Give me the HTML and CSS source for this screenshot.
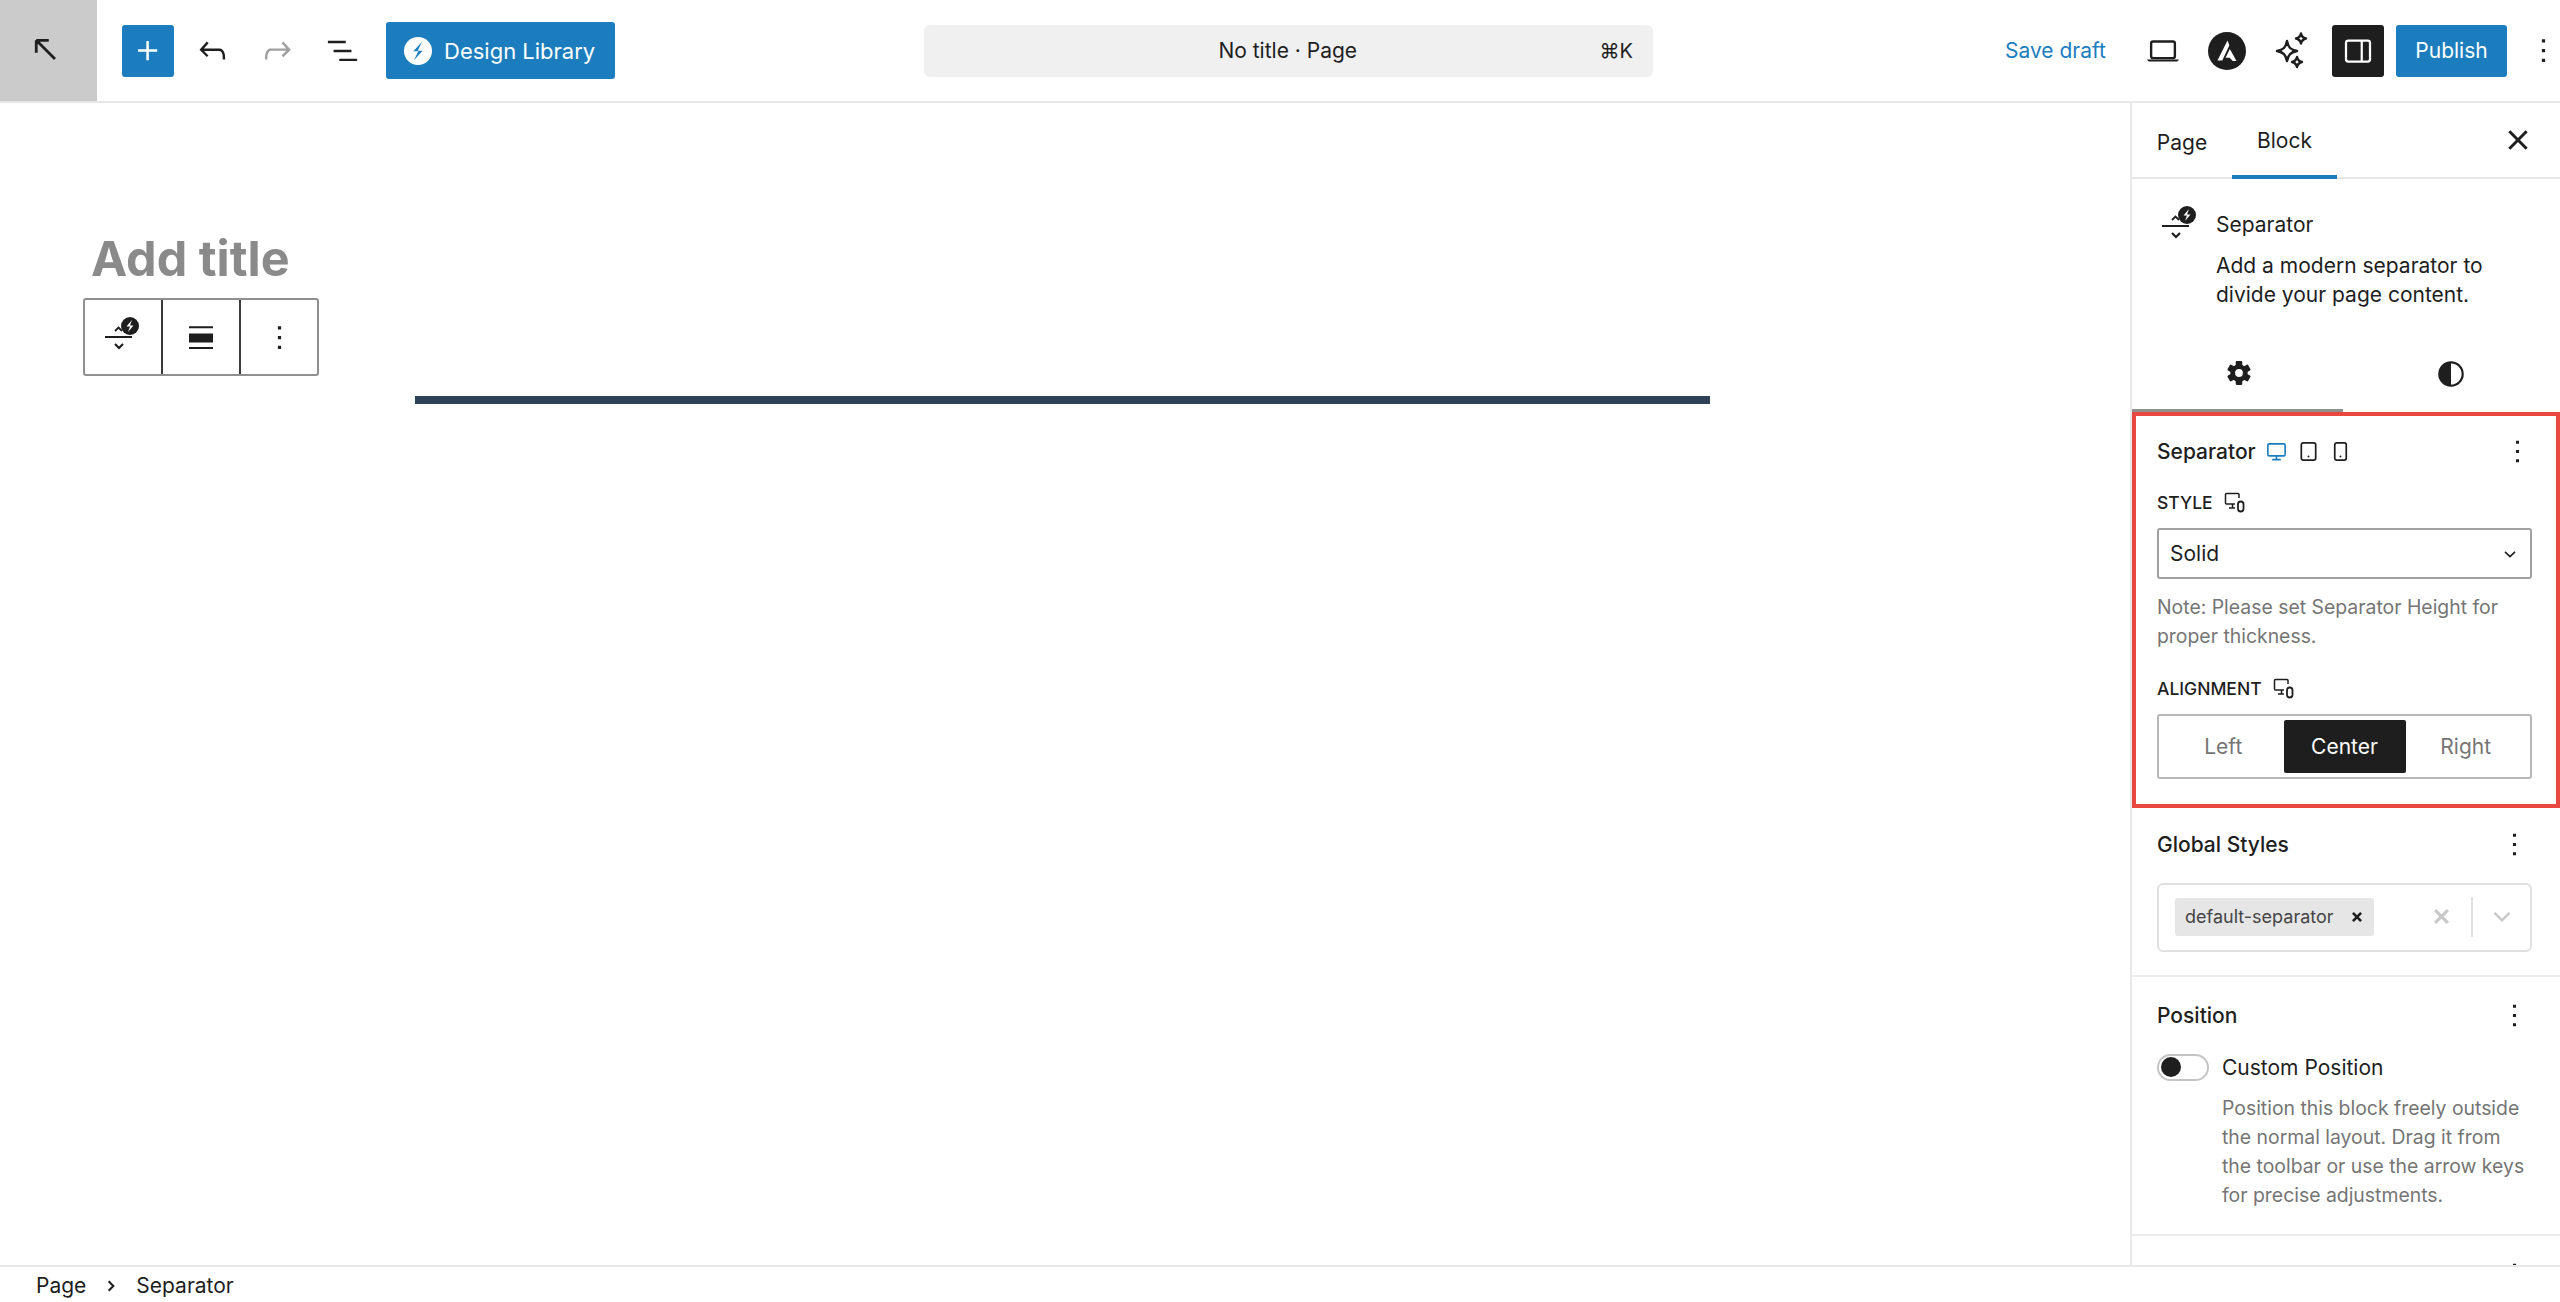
FILE: index.html
```html
<!DOCTYPE html>
<html lang="en">
<head>
  <meta charset="UTF-8" />
  <meta name="viewport" content="width=device-width, initial-scale=1.0" />
  <title>Edit Page</title>
  <link rel="stylesheet" href="styles.css">
</head>
<body>
  <svg class="defs" width="0" height="0">
    <symbol id="i-more" viewBox="0 0 24 24"><path d="M13 19h-2v-2h2v2zm0-6h-2v-2h2v2zm0-6h-2V5h2v2z"/></symbol>
    <symbol id="i-link" viewBox="0 0 24 24"><path d="M3.500 13V4.500a1 1 0 0 1 1-1H16a1 1 0 0 1 1 1V8M3.500 13a1 1 0 0 0 1 1H13M7 18h6M10.500 14v4" fill="none" stroke="currentColor" stroke-width="1.500"/><rect x="16" y="11.500" width="5.500" height="10" rx="2.700" fill="none" stroke="currentColor" stroke-width="1.800"/></symbol>
    <symbol id="i-sep" viewBox="0 0 40 40"><path d="M3 20h27" fill="none" stroke="currentColor" stroke-width="2"/><path d="M13 14l3.500-3.500 3.500 3.500" fill="none" stroke="currentColor" stroke-width="1.800"/><path d="M13 27l4 4 4-4" fill="none" stroke="currentColor" stroke-width="2.200"/><circle cx="28" cy="9" r="9"/><path d="M30 3l-5.500 6.500H28l-2 5.500 5.500-6.500H28z" fill="#fff"/></symbol>
  </svg>

  <header class="topbar">
    <div class="back">
      <svg class="icon-back" viewBox="0 0 24 24"><path d="M5 5h10M5 5v10M5 5l15 15" fill="none" stroke="currentColor" stroke-width="2.200"/></svg>
    </div>
    <div class="tools">
      <button class="btn-add"><svg viewBox="0 0 24 24"><path d="M11 12.500V17.500H12.500V12.500H17.500V11H12.500V6H11V11H6V12.500H11Z"/></svg></button>
      <svg class="tool" viewBox="0 0 24 24"><path d="M18.300 11.700c-.6-.6-1.400-.9-2.300-.9H6.700l2.900-3.300-1.100-1-4.500 5L8.500 16l1-1-2.700-2.700H16c.5 0 .9.2 1.300.5 1 1 1 3.400 1 4.500v.3h1.500v-.2c0-1.500 0-4.300-1.500-5.700z"/></svg>
      <svg class="tool off" viewBox="0 0 24 24"><path d="M15.600 6.500l-1.100 1 2.900 3.300H8c-.9 0-1.700.3-2.300.9-1.400 1.500-1.400 4.200-1.400 5.600v.2h1.500v-.3c0-1.100 0-3.500 1-4.500.3-.3.7-.5 1.300-.5h9.200L14.500 15l1.100 1.100 4.600-4.600-4.600-5z"/></svg>
      <svg class="tool" viewBox="0 0 24 24"><path d="M3 6h11v1.500H3V6zm3.500 5.500h11V13h-11v-1.500zM21 17H10v1.500h11V17z"/></svg>
      <button class="btn-library">
        <svg viewBox="0 0 24 24"><circle cx="12" cy="12" r="12" fill="#fff"/><path d="M15.500 4L8 12.200h4.300L8.500 20l7.500-8.200h-4.300z" fill="#1b7dbd"/></svg>
        Design Library
      </button>
    </div>
    <div class="command">
      <span class="command-title">No title · Page</span>
      <span class="command-key">⌘K</span>
    </div>
    <div class="actions">
      <span class="save">Save draft</span>
      <svg class="tool laptop" viewBox="0 0 24 24"><rect x="4.500" y="6" width="15" height="10.500" rx="1.200" fill="none" stroke="currentColor" stroke-width="1.500"/><path d="M2 17.300h20v.4l-1 1H3l-1-1z"/></svg>
      <svg class="astra" viewBox="0 0 40 40"><circle cx="20" cy="20" r="20" fill="#1e1e1e"/><path d="M20.500 9L10 30h5l7.500-16zM23 18l-4.500 9h4.300l3.200 3.500H30z" fill="#fff"/></svg>
      <svg class="sparkle" viewBox="0 0 40 40"><g fill="none" stroke="#1e1e1e" stroke-width="2.400" stroke-linejoin="round"><path d="M15 10c1.300 6.500 3.500 8.800 10 10-6.500 1.300-8.700 3.500-10 10-1.300-6.500-3.500-8.700-10-10 6.500-1.200 8.700-3.500 10-10z"/><path d="M29 2.500c.7 3.300 1.700 4.300 5 5-3.300.7-4.300 1.700-5 5-.7-3.300-1.700-4.300-5-5 3.300-.7 4.300-1.700 5-5z"/><path d="M25 26c.7 3.300 1.700 4.300 5 5-3.300.7-4.300 1.700-5 5-.7-3.300-1.700-4.300-5-5 3.300-.7 4.300-1.700 5-5z"/></g></svg>
      <button class="btn-sidebar"><svg viewBox="0 0 24 24"><rect x="4" y="5" width="16" height="14" rx="1.500" fill="none" stroke="#fff" stroke-width="1.500"/><path d="M14.500 5v14" stroke="#fff" stroke-width="1.500"/></svg></button>
      <button class="btn-publish">Publish</button>
      <svg class="more-top"><use href="#i-more"/></svg>
    </div>
  </header>

  <div class="main">
    <section class="canvas">
      <h1 class="post-title">Add title</h1>
      <div class="block-toolbar">
        <div class="tb-cell"><svg class="tb-sep"><use href="#i-sep"/></svg></div>
        <div class="tb-cell">
          <svg class="tb-align" viewBox="0 0 24 24"><path d="M0 0.800h24v2H0zM0 8h24v9H0zM0 21.500h24v2H0z"/></svg>
        </div>
        <div class="tb-cell"><svg class="tb-more"><use href="#i-more"/></svg></div>
      </div>
      <div class="separator"></div>
    </section>

    <aside class="sidebar">
      <div class="tabs">
        <span class="tab">Page</span>
        <span class="tab active">Block</span>
        <svg class="close" viewBox="0 0 24 24"><path d="M5.500 5.500l13 13M18.500 5.500l-13 13" fill="none" stroke="currentColor" stroke-width="2.200"/></svg>
      </div>

      <div class="card">
        <svg class="card-icon"><use href="#i-sep"/></svg>
        <div>
          <div class="card-title">Separator</div>
          <p class="card-desc">Add a modern separator to divide your page content.</p>
        </div>
      </div>

      <div class="icon-tabs">
        <div class="icon-tab active">
          <svg viewBox="0 0 24 24"><g fill="#1e1e1e"><rect x="9" y="1" width="6" height="22" rx="1"/><rect x="9" y="1" width="6" height="22" rx="1" transform="rotate(60 12 12)"/><rect x="9" y="1" width="6" height="22" rx="1" transform="rotate(120 12 12)"/><circle cx="12" cy="12" r="8"/></g><circle cx="12" cy="12" r="3.600" fill="#fff"/></svg>
        </div>
        <div class="icon-tab">
          <svg viewBox="0 0 24 24"><circle cx="12" cy="12" r="10.800" fill="#fff" stroke="#1e1e1e" stroke-width="2"/><path d="M12 1.200a10.800 10.800 0 0 0 0 21.600z" fill="#1e1e1e"/></svg>
        </div>
      </div>

      <div class="panel panel-marked">
        <div class="panel-head">
          <span class="panel-title">Separator</span>
          <svg class="device on" viewBox="0 0 24 24"><rect x="3" y="4" width="18" height="12.500" rx="1.500" fill="none" stroke="currentColor" stroke-width="1.700"/><path d="M12 16.500V20M7.500 20.500h9" fill="none" stroke="currentColor" stroke-width="1.700"/></svg>
          <svg class="device" viewBox="0 0 24 24"><rect x="4.500" y="3" width="15" height="18" rx="2" fill="none" stroke="currentColor" stroke-width="1.800"/><circle cx="12" cy="17.300" r="1"/></svg>
          <svg class="device" viewBox="0 0 24 24"><rect x="6" y="3" width="12" height="18" rx="2" fill="none" stroke="currentColor" stroke-width="1.800"/><circle cx="12" cy="17.300" r="1"/></svg>
          <svg class="more"><use href="#i-more"/></svg>
        </div>

        <div class="field-label first">STYLE <svg><use href="#i-link"/></svg></div>
        <div class="select">
          <span>Solid</span>
          <svg viewBox="0 0 24 24"><path d="M6 9.500l6 5.500 6-5.500" fill="none" stroke="currentColor" stroke-width="2"/></svg>
        </div>
        <p class="note">Note: Please set Separator Height for proper thickness.</p>

        <div class="field-label">ALIGNMENT <svg><use href="#i-link"/></svg></div>
        <div class="segments">
          <span class="segment">Left</span>
          <span class="segment selected">Center</span>
          <span class="segment">Right</span>
        </div>
      </div>

      <div class="panel panel-global">
        <div class="panel-head">
          <span class="panel-title">Global Styles</span>
          <svg class="more"><use href="#i-more"/></svg>
        </div>
        <div class="combo">
          <span class="chip">default-separator
            <svg viewBox="0 0 24 24"><path d="M5 5l14 14M19 5L5 19" fill="none" stroke="currentColor" stroke-width="4.500"/></svg>
          </span>
          <svg class="combo-clear" viewBox="0 0 24 24"><path d="M4 4l16 16M20 4L4 20" fill="none" stroke="currentColor" stroke-width="4"/></svg>
          <span class="combo-divider"></span>
          <svg class="combo-arrow" viewBox="0 0 24 24"><path d="M3 7l9 9 9-9" fill="none" stroke="currentColor" stroke-width="3"/></svg>
        </div>
      </div>

      <div class="panel panel-position">
        <div class="panel-head">
          <span class="panel-title">Position</span>
          <svg class="more"><use href="#i-more"/></svg>
        </div>
        <div class="toggle-row">
          <span class="toggle"></span>
          <span>Custom Position</span>
        </div>
        <p class="help">Position this block freely outside the normal layout. Drag it from the toolbar or use the arrow keys for precise adjustments.</p>
      </div>

      <div class="panel panel-next">
        <div class="panel-head">
          <svg class="more"><use href="#i-more"/></svg>
        </div>
      </div>
    </aside>
  </div>

  <footer class="crumbs">
    <span>Page</span>
    <svg viewBox="0 0 24 24"><path d="M8 4l8 8-8 8" fill="none" stroke="currentColor" stroke-width="3.500"/></svg>
    <span>Separator</span>
  </footer>
</body>
</html>
```

FILE: styles.css
```css
* {
  box-sizing: border-box;
}

html, body {
  height: 100%;
}

body {
  margin: 0;
  display: flex;
  flex-direction: column;
  overflow: hidden;
  font-family: Inter, "Liberation Sans", sans-serif;
  font-size: 21px;
  color: #1e1e1e;
  background-color: white;
}

p {
  margin: 0;
}

button {
  border: none;
  padding: 0;
  font: inherit;
  color: white;
  border-radius: 3px;
}

svg {
  fill: currentColor;
}

.defs {
  position: absolute;
}

/* top bar */
.topbar {
  display: flex;
  align-items: center;
  height: 103px;
  flex: none;
  border-bottom: 2px solid #e8e8e8;
}

.back {
  width: 97px;
  height: 101px;
  flex: none;
  display: flex;
  align-items: center;
  justify-content: center;
  background-color: #cbcbcb;
}

.icon-back {
  width: 30px;
  height: 30px;
  margin: 0 8px 4px 0;
}

.tools {
  display: flex;
  align-items: center;
  flex: none;
  width: 827px;
  padding-left: 25px;
}

.btn-add {
  width: 52px;
  height: 52px;
  background-color: #1b7dbd;
  display: flex;
  align-items: center;
  justify-content: center;
}

.btn-add svg {
  width: 40px;
  height: 40px;
  fill: white;
}

.tool {
  width: 39px;
  height: 39px;
  flex: none;
}

.tools .tool {
  margin-left: 19px;
}

.tools .tool + .tool {
  margin-left: 26px;
}

.tool.off {
  color: #a0a0a0;
}

.btn-library {
  display: flex;
  align-items: center;
  gap: 12px;
  width: 229px;
  height: 57px;
  margin-left: 24px;
  padding-left: 18px;
  background-color: #1b7dbd;
  font-size: 22px;
}

.btn-library svg {
  width: 28px;
  height: 28px;
}

.command {
  width: 729px;
  height: 52px;
  flex: none;
  display: flex;
  align-items: center;
  justify-content: space-between;
  padding: 0 20px 0 15px;
  background-color: #f0f0f0;
  border-radius: 6px;
}

.command-title {
  flex: 1;
  text-align: center;
  padding-left: 37px;
}

.command-key {
  font-size: 20px;
}

.actions {
  flex: 1;
  display: flex;
  align-items: center;
  padding-left: 352px;
}

.save {
  color: #1b7dbd;
  white-space: nowrap;
}

.laptop {
  margin-left: 38px;
  width: 38px;
  height: 38px;
}

.astra {
  width: 38px;
  height: 38px;
  flex: none;
  margin-left: 26px;
}

.sparkle {
  width: 40px;
  height: 40px;
  flex: none;
  margin-left: 26px;
}

.btn-sidebar {
  width: 52px;
  height: 52px;
  flex: none;
  margin-left: 20px;
  background-color: #1e1e1e;
  display: flex;
  align-items: center;
  justify-content: center;
}

.btn-sidebar svg {
  width: 36px;
  height: 36px;
  fill: none;
}

.btn-publish {
  width: 111px;
  height: 52px;
  flex: none;
  margin-left: 12px;
  background-color: #1b7dbd;
}

.more-top {
  width: 39px;
  height: 39px;
  flex: none;
  margin-left: 17px;
}

/* main area */
.main {
  flex: 1;
  min-height: 0;
  display: flex;
}

.canvas {
  flex: 1;
  position: relative;
  padding: 128px 0 0 91px;
}

.post-title {
  margin: 0;
  font-size: 48.500px;
  line-height: 56px;
  font-weight: 700;
  color: #8a8a8a;
}

.block-toolbar {
  position: absolute;
  left: 83px;
  top: 195px;
  display: flex;
  height: 78px;
  background-color: white;
  border: 2px solid #8f8f8f;
  border-radius: 3px;
}

.tb-cell {
  width: 78px;
  display: flex;
  align-items: center;
  justify-content: center;
  border-left: 2px solid #3a3a3a;
}

.tb-cell:first-child {
  width: 76px;
  border-left: none;
}

.tb-sep {
  width: 40px;
  height: 40px;
  margin-right: 2px;
}

.tb-align {
  width: 24px;
  height: 27px;
}

.tb-more {
  width: 39px;
  height: 39px;
}

.separator {
  width: 1295px;
  height: 8px;
  margin: 109px 0 0 324px;
  background-color: #2f4256;
}

/* sidebar */
.sidebar {
  width: 430px;
  flex: none;
  border-left: 2px solid #e8e8e8;
  overflow: hidden;
}

.tabs {
  display: flex;
  align-items: stretch;
  height: 76px;
  border-bottom: 2px solid #e8e8e8;
}

.tab {
  display: flex;
  align-items: center;
  justify-content: center;
  width: 100px;
  margin-bottom: -2px;
  padding-top: 2px;
}

.tab.active {
  width: 105px;
  padding-top: 3px;
  border-bottom: 4px solid #1b7dbd;
}

.close {
  width: 32px;
  height: 32px;
  align-self: center;
  margin-left: auto;
  margin-right: 26px;
}

.card {
  display: flex;
  gap: 17px;
  height: 161px;
  padding: 27px 20px 0 27px;
}

.card-icon {
  width: 40px;
  height: 40px;
  flex: none;
}

.card-title {
  line-height: 29px;
  margin-top: 4px;
}

.card-desc {
  margin-top: 12px;
  line-height: 29px;
}

.icon-tabs {
  display: flex;
  height: 72px;
}

.icon-tab {
  flex: 1;
  display: flex;
  align-items: center;
  justify-content: center;
  padding-bottom: 4px;
}

.icon-tab.active {
  flex: none;
  width: 211px;
  border-bottom: 3px solid #8f8f8f;
}

.icon-tab.active svg {
  margin-left: 3px;
}

.icon-tab:last-child {
  padding-right: 2px;
}

.icon-tab svg {
  width: 26px;
  height: 26px;
}

.panel {
  border-bottom: 2px solid #ececec;
  padding: 24px 28px 24px 25px;
}

.panel-marked {
  border: 4px solid #e8483f;
  padding: 21px 24px 25px 21px;
  height: 396px;
}

.panel-head {
  display: flex;
  align-items: center;
  height: 29px;
}

.panel-title {
  font-weight: 500;
}

.panel-marked .panel-title {
  margin-right: 9px;
}

.device {
  width: 23px;
  height: 23px;
  margin-right: 9px;
}

.device.on {
  color: #1b7dbd;
}

.more {
  width: 37px;
  height: 37px;
  flex: none;
  margin-left: auto;
  margin-right: -4px;
}

.panel-global .more,
.panel-position .more,
.panel-next .more {
  margin-right: -1px;
}

.field-label {
  display: flex;
  align-items: center;
  gap: 9px;
  height: 24px;
  margin-top: 25px;
  font-size: 17.500px;
  font-weight: 500;
}

.field-label.first {
  margin-top: 24px;
}

.field-label svg {
  width: 24px;
  height: 24px;
}

.select {
  display: flex;
  align-items: center;
  justify-content: space-between;
  height: 51px;
  margin-top: 14px;
  padding: 0 10px 0 11px;
  border: 2px solid #a0a0a0;
  border-radius: 3px;
}

.select svg {
  width: 20px;
  height: 20px;
}

.note {
  margin-top: 14px;
  line-height: 29px;
  font-size: 19.400px;
  color: #757575;
}

.segments {
  display: flex;
  align-items: center;
  height: 65px;
  margin-top: 14px;
  padding: 0 4px;
  border: 2px solid #b8b8b8;
  border-radius: 3px;
}

.segment {
  flex: 1;
  display: flex;
  align-items: center;
  justify-content: center;
  height: 53px;
  color: #757575;
}

.segment.selected {
  flex: none;
  width: 122px;
  color: white;
  background-color: #1e1e1e;
  border-radius: 2px;
}

.panel-global {
  padding-top: 22px;
  height: 169px;
}

.combo {
  display: flex;
  align-items: center;
  height: 69px;
  margin-top: 24px;
  padding: 0 0 2px 16px;
  border: 2px solid #e0e0e0;
  border-radius: 6px;
}

.chip {
  display: flex;
  align-items: center;
  justify-content: space-between;
  width: 199px;
  height: 38px;
  padding: 0 10px;
  font-size: 18px;
  color: #444;
  background-color: #e6e6e6;
  border-radius: 3px;
}

.chip svg {
  width: 14px;
  height: 14px;
  color: #1e1e1e;
}

.combo-clear {
  width: 19px;
  height: 19px;
  margin-left: 58px;
  color: #c8c8c8;
}

.combo-divider {
  width: 2px;
  height: 40px;
  margin-left: 20px;
  background-color: #e0e0e0;
}

.combo-arrow {
  width: 20px;
  height: 20px;
  margin-left: 19px;
  color: #c8c8c8;
}

.toggle-row {
  display: flex;
  align-items: center;
  gap: 13px;
  height: 30px;
  margin-top: 22px;
}

.toggle {
  width: 52px;
  height: 27px;
  flex: none;
  display: flex;
  align-items: center;
  padding-left: 2px;
  border: 2px solid #c4c4c4;
  border-radius: 14px;
}

.toggle::before {
  content: "";
  width: 20px;
  height: 20px;
  border-radius: 50%;
  background-color: #1e1e1e;
}

.help {
  margin: 12px 0 0 65px;
  padding-right: 6px;
  line-height: 29px;
  font-size: 19.400px;
  color: #757575;
}

.panel-next {
  border-bottom: none;
}

/* breadcrumb */
.crumbs {
  display: flex;
  align-items: center;
  gap: 17px;
  height: 37px;
  flex: none;
  padding: 2px 0 0 36px;
  background-color: white;
  border-top: 2px solid #e8e8e8;
}

.crumbs svg {
  width: 14px;
  height: 14px;
  margin: 0 1px;
}
```
